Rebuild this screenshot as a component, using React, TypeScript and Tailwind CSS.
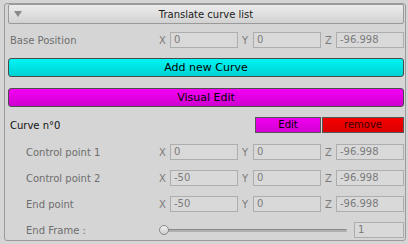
import React from 'react';

const font = { fontFamily: '"DejaVu Sans", "Liberation Sans", sans-serif' };

const Field = ({ value, w = 'w-[68px]' }: { value: string; w?: string }) => (
  <div className={`${w} h-[16px] border border-[#adadad] bg-[#d9d9d9] pl-[3px] text-[10px] leading-[14px] text-[#7b7b7b]`}>
    {value}
  </div>
);

const Vec = ({ x, y, z }: { x: string; y: string; z: string }) => (
  <div className="flex gap-[4px]">
    {[['X', x], ['Y', y], ['Z', z]].map(([k, v]) => (
      <div key={k} className="flex w-[79px] items-center">
        <span className="w-[11px] text-[10px] text-[#7a7a7a]">{k}</span>
        <Field value={v} />
      </div>
    ))}
  </div>
);

const Row = ({ label, indent, x, y, z }: { label: string; indent?: boolean; x: string; y: string; z: string }) => (
  <div className="flex h-[16px] items-center">
    <span className={`flex-1 text-[10px] text-[#6e6e6e] ${indent ? 'pl-[18px]' : 'pl-[2px]'}`}>{label}</span>
    <Vec x={x} y={y} z={z} />
  </div>
);

export default function App() {
  return (
    <div className="h-[244px] w-[408px] bg-[#d5d5d5] pl-[4px] pt-[3px]" style={font}>
      <div className="flex h-[238px] w-[402px] flex-col rounded-[3px] border border-[#9b9b9b] pl-[3px] pr-[1px]">
        <div className="flex h-[20px] items-center rounded-[2px] border border-[#9a9a9a] bg-gradient-to-b from-[#ececec] to-[#d2d2d2]">
          <svg width="10" height="8" viewBox="0 0 10 8" className="ml-[4px]">
            <path d="M1 1 L9 1 L5 7 Z" fill="#8a8a8a" />
          </svg>
          <span className="flex-1 pr-[14px] text-center text-[10px] text-[#1c1c1c]">Translate curve list</span>
        </div>

        <div className="mt-[8px]">
          <Row label="Base Position" x="0" y="0" z="-96.998" />
        </div>

        <button className="mt-[10px] h-[19px] rounded-[3px] border border-[#4a4a4a] bg-gradient-to-b from-[#00f4f4] to-[#00d2d2] text-[11px] leading-[17px] text-black">
          Add new Curve
        </button>
        <button className="mt-[11px] h-[19px] rounded-[3px] border border-[#4a4a4a] bg-gradient-to-b from-[#f400f4] to-[#cf00cf] text-[11px] leading-[17px] text-black">
          Visual Edit
        </button>

        <div className="mt-[10px] flex h-[16px] items-center">
          <span className="flex-1 pl-[2px] text-[10px] text-[#111]">Curve n°0</span>
          <div className="flex h-[16px] gap-[1px]">
            <div className="w-[66px] border border-[#555] bg-gradient-to-b from-[#f000f0] to-[#d400d4] text-center text-[10px] leading-[14px] text-black">
              Edit
            </div>
            <div className="w-[82px] border border-[#555] bg-gradient-to-b from-[#f40000] to-[#dc0000] text-center text-[10px] leading-[14px] text-[#3a0000]">
              remove
            </div>
          </div>
        </div>

        <div className="mt-[11px] flex flex-col gap-[10px]">
          <Row label="Control point 1" indent x="0" y="0" z="-96.998" />
          <Row label="Control point 2" indent x="-50" y="0" z="-96.998" />
          <Row label="End point" indent x="-50" y="0" z="-96.998" />
          <div className="flex h-[16px] items-center">
            <span className="flex-1 pl-[18px] text-[10px] text-[#6e6e6e]">End Frame :</span>
            <div className="flex w-[245px] items-center">
              <div className="relative mr-[7px] flex h-[12px] w-[188px] items-center">
                <div className="ml-[2px] h-[3px] flex-1 rounded-full border-t border-[#8a8a8a] bg-[#b0b0b0]" />
                <div className="absolute left-[0px] top-[1px] h-[10px] w-[10px] rounded-full border border-[#888] bg-gradient-to-b from-[#f0f0f0] to-[#cfcfcf]" />
              </div>
              <Field value="1" w="w-[50px]" />
            </div>
          </div>
        </div>
      </div>
    </div>
  );
}
